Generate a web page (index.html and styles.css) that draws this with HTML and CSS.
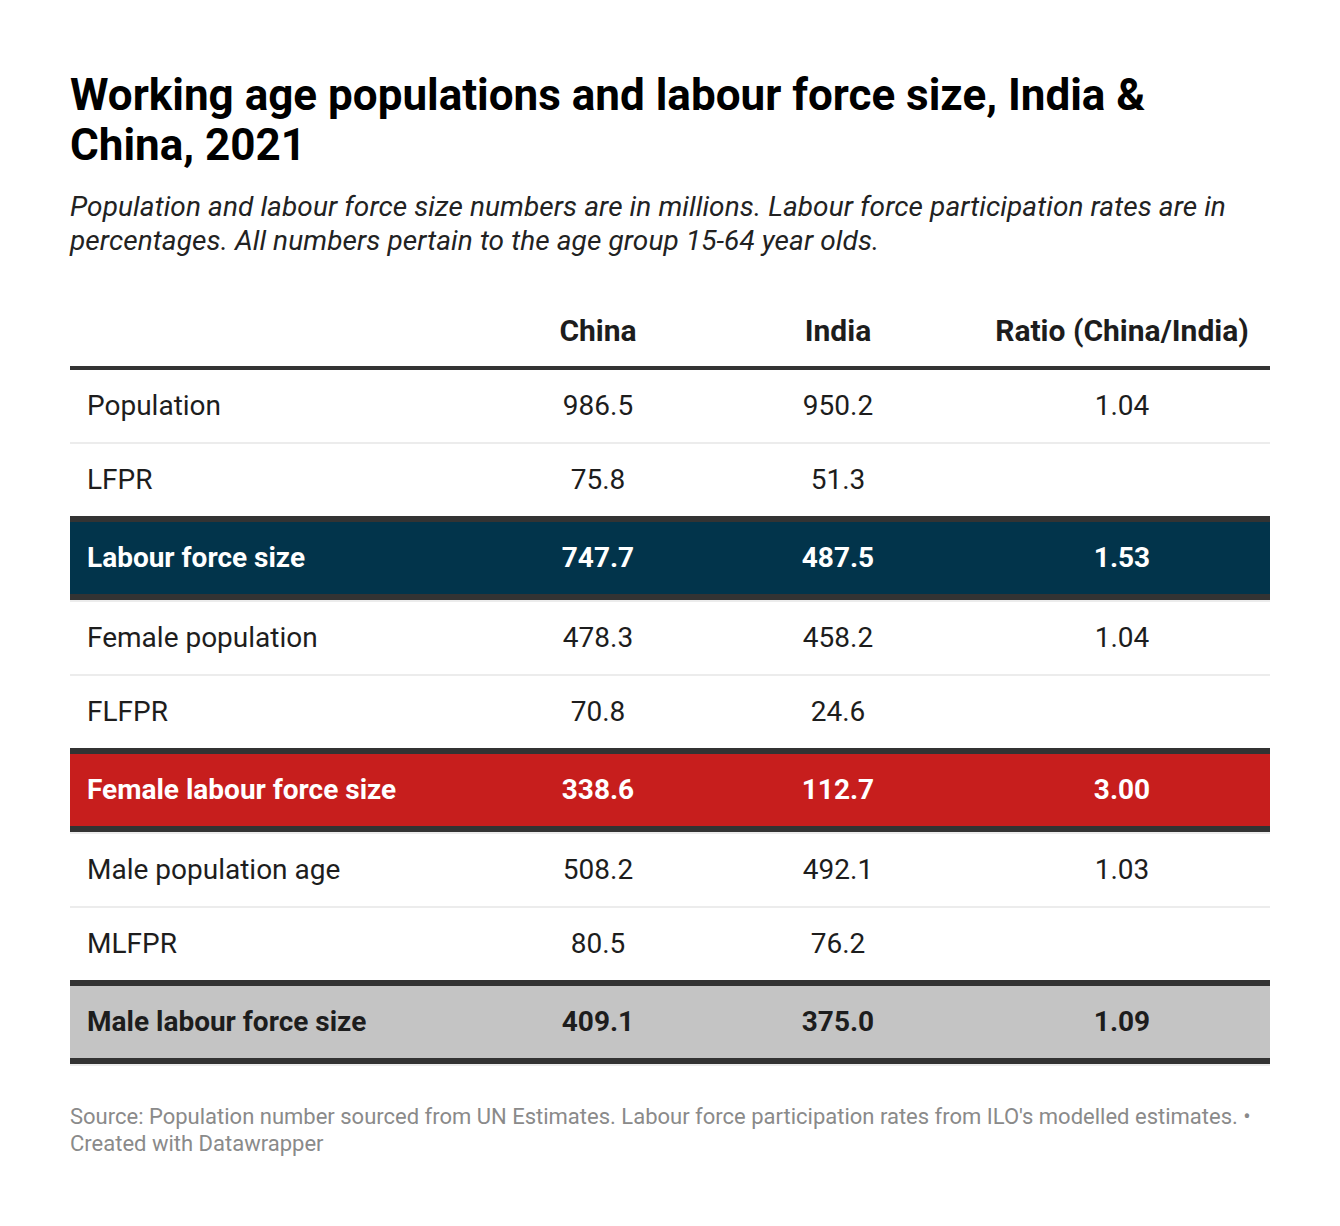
FILE: index.html
```html
<!DOCTYPE html>
<html lang="en">
<head>
<meta charset="utf-8">
<title>Working age populations and labour force size, India &amp; China, 2021</title>
<link rel="stylesheet" href="styles.css">
</head>
<body>
<div class="chart">
  <h1 class="title">Working age populations and labour force size, India &amp; China, 2021</h1>
  <p class="subtitle">Population and labour force size numbers are in millions. Labour force participation rates are in percentages. All numbers pertain to the age group 15-64 year olds.</p>

  <div class="table">
    <div class="row head">
      <div class="cell label"></div>
      <div class="cell num">China</div>
      <div class="cell num">India</div>
      <div class="cell num ratio">Ratio (China/India)</div>
    </div>

    <div class="row">
      <div class="cell label">Population</div>
      <div class="cell num">986.5</div>
      <div class="cell num">950.2</div>
      <div class="cell num ratio">1.04</div>
    </div>
    <div class="row before-hl">
      <div class="cell label">LFPR</div>
      <div class="cell num">75.8</div>
      <div class="cell num">51.3</div>
      <div class="cell num ratio"></div>
    </div>
    <div class="row hl navy">
      <div class="cell label">Labour force size</div>
      <div class="cell num">747.7</div>
      <div class="cell num">487.5</div>
      <div class="cell num ratio">1.53</div>
    </div>

    <div class="row">
      <div class="cell label">Female population</div>
      <div class="cell num">478.3</div>
      <div class="cell num">458.2</div>
      <div class="cell num ratio">1.04</div>
    </div>
    <div class="row before-hl">
      <div class="cell label">FLFPR</div>
      <div class="cell num">70.8</div>
      <div class="cell num">24.6</div>
      <div class="cell num ratio"></div>
    </div>
    <div class="row hl red">
      <div class="cell label">Female labour force size</div>
      <div class="cell num">338.6</div>
      <div class="cell num">112.7</div>
      <div class="cell num ratio">3.00</div>
    </div>

    <div class="row">
      <div class="cell label">Male population age</div>
      <div class="cell num">508.2</div>
      <div class="cell num">492.1</div>
      <div class="cell num ratio">1.03</div>
    </div>
    <div class="row before-hl">
      <div class="cell label">MLFPR</div>
      <div class="cell num">80.5</div>
      <div class="cell num">76.2</div>
      <div class="cell num ratio"></div>
    </div>
    <div class="row hl grey">
      <div class="cell label">Male labour force size</div>
      <div class="cell num">409.1</div>
      <div class="cell num">375.0</div>
      <div class="cell num ratio">1.09</div>
    </div>
  </div>

  <p class="footer">Source: Population number sourced from UN Estimates. Labour force participation rates from ILO's modelled estimates. • Created with Datawrapper</p>
</div>
</body>
</html>
```

FILE: styles.css
```css
html, body {
  margin: 0;
  padding: 0;
  background: #ffffff;
}

body {
  font-family: Roboto, "Liberation Sans", Arial, sans-serif;
  color: #1d1d1d;
}

.chart {
  width: 1200px;
  padding: 70px 70px 40px 70px;
}

.title {
  margin: 0;
  font-size: 44px;
  line-height: 50px;
  font-weight: 700;
  color: #000000;
  padding-right: 60px;
}

.subtitle {
  margin: 20px 0 0 0;
  font-size: 28px;
  line-height: 34px;
  letter-spacing: 0.1px;
  font-style: italic;
  color: #222222;
}

.row {
  display: grid;
  grid-template-columns: 408px 240px 240px 312px;
  align-items: center;
  height: 72px;
  border-bottom: 2px solid #ececec;
  font-size: 28px;
  color: #1d1d1d;
}

.row.head {
  height: auto;
  padding-top: 56px;
  padding-bottom: 18px;
  border-bottom: 4px solid #333333;
  font-size: 30px;
  font-weight: 700;
  align-items: end;
}

.row.before-hl {
  border-bottom: none;
}

.row.hl {
  height: 72px;
  border-top: 6px solid #333333;
  border-bottom: 6px solid #333333;
  margin-bottom: 2px;
  box-shadow: 0 2px 0 #ececec;
  font-weight: 700;
}

.row.navy {
  background: #02344b;
  color: #ffffff;
}

.row.red {
  background: #c71e1d;
  color: #ffffff;
}

.row.grey {
  background: #c4c4c4;
  color: #1d1d1d;
}

.cell {
  line-height: 34px;
}

.cell.label {
  padding-left: 17px;
}

.cell.num {
  text-align: center;
}

.cell.ratio {
  width: 296px;
  margin-left: 16px;
}

.footer {
  margin: 39px 0 0 0;
  font-size: 22px;
  line-height: 27px;
  color: #8a8a8a;
}
```
